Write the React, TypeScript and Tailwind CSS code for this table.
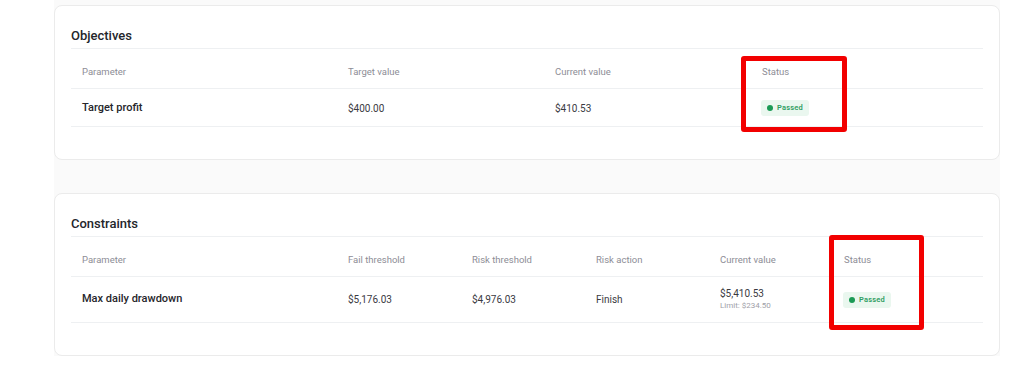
import React from 'react';

const font = { fontFamily: 'Roboto, "Liberation Sans", sans-serif' };

function Badge() {
  return (
    <span className="inline-flex items-center gap-[4px] h-[16px] px-[6px] rounded-[3px] bg-[#eaf7ef] text-[7.5px] font-semibold tracking-[0.2px] text-[#2f9d62]">
      <span className="w-[6px] h-[6px] rounded-full bg-[#1b9a55]" />
      Passed
    </span>
  );
}

function Card({ title, children }: { title: string; children: React.ReactNode }) {
  return (
    <div className="bg-white border border-[#ebebeb] rounded-[8px] px-[16px] pb-[32px]">
      <div className="pt-[22px] pb-[4px] text-[13px] leading-[16px] font-medium text-[#24262b] border-b border-[#eef0f2]">
        {title}
      </div>
      {children}
    </div>
  );
}

function Objectives() {
  const cols = 'grid grid-cols-[266px_207px_207px_1fr]';
  return (
    <Card title="Objectives">
      <div className={`${cols} pt-[17px] pb-[10px] text-[9.5px] leading-[12px] text-[#8d8d96] border-b border-[#eef0f2]`}>
        <div className="pl-[11px]">Parameter</div>
        <div className="pl-[11px]">Target value</div>
        <div className="pl-[11px]">Current value</div>
        <div className="pl-[11px]">Status</div>
      </div>
      <div className={`${cols} h-[38px] pt-[1px] items-center text-[10px] text-[#3a3a3f] border-b border-[#eef0f2]`}>
        <div className="pl-[11px] text-[11px] font-medium text-[#26262b]">Target profit</div>
        <div className="pl-[11px]">$400.00</div>
        <div className="pl-[11px]">$410.53</div>
        <div className="pl-[10px]">
          <Badge />
        </div>
      </div>
    </Card>
  );
}

function Constraints() {
  const cols = 'grid grid-cols-[266px_124px_124px_124px_124px_1fr]';
  return (
    <Card title="Constraints">
      <div className={`${cols} pt-[17px] pb-[10px] text-[9.5px] leading-[12px] text-[#8d8d96] border-b border-[#eef0f2]`}>
        <div className="pl-[11px]">Parameter</div>
        <div className="pl-[11px]">Fail threshold</div>
        <div className="pl-[11px]">Risk threshold</div>
        <div className="pl-[11px]">Risk action</div>
        <div className="pl-[11px]">Current value</div>
        <div className="pl-[11px]">Status</div>
      </div>
      <div className={`${cols} h-[46px] items-center text-[10px] text-[#3a3a3f] border-b border-[#eef0f2]`}>
        <div className="pl-[11px] text-[11px] font-medium text-[#26262b]">Max daily drawdown</div>
        <div className="pl-[11px]">$5,176.03</div>
        <div className="pl-[11px]">$4,976.03</div>
        <div className="pl-[11px]">Finish</div>
        <div className="pl-[11px] flex flex-col">
          <span className="leading-[12px]">$5,410.53</span>
          <span className="mt-[1px] text-[8px] leading-[10px] text-[#a0a0a8]">Limit: $234.50</span>
        </div>
        <div className="pl-[10px]">
          <Badge />
        </div>
      </div>
    </Card>
  );
}

export default function App() {
  return (
    <div className="relative w-[1034px] h-[375px] bg-white overflow-hidden" style={font}>
      <div className="ml-[54px] w-[946px] pt-[5px] bg-[#fafafa] flex flex-col gap-[33px]">
        <Objectives />
        <Constraints />
      </div>

      {/* annotation boxes */}
      <div className="absolute left-[741px] top-[56px] w-[106px] h-[76px] border-[5px] border-[#f20000] rounded-[3px]" />
      <div className="absolute left-[829px] top-[235px] w-[95px] h-[95px] border-[5px] border-[#f20000] rounded-[3px]" />
    </div>
  );
}
